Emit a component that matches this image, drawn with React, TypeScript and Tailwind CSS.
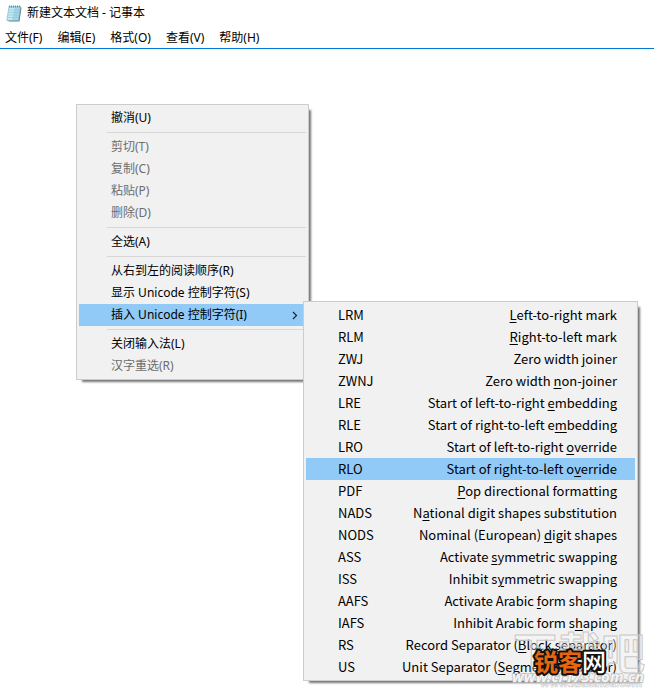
import React from "react";

type Item = { label: string; disabled?: boolean; submenu?: boolean };

const MENU_BAR = ["文件(F)", "编辑(E)", "格式(O)", "查看(V)", "帮助(H)"];

const GROUPS: Item[][] = [
  [{ label: "撤消(U)" }],
  [
    { label: "剪切(T)", disabled: true },
    { label: "复制(C)", disabled: true },
    { label: "粘贴(P)", disabled: true },
    { label: "删除(D)", disabled: true },
  ],
  [{ label: "全选(A)" }],
  [
    { label: "从右到左的阅读顺序(R)" },
    { label: "显示 Unicode 控制字符(S)" },
    { label: "插入 Unicode 控制字符(I)", submenu: true },
  ],
  [{ label: "关闭输入法(L)" }, { label: "汉字重选(R)", disabled: true }],
];

// code, text before the access key, access key, text after it
const CHARACTERS: [string, string, string, string][] = [
  ["LRM", "", "L", "eft-to-right mark"],
  ["RLM", "", "R", "ight-to-left mark"],
  ["ZWJ", "Zero width ", "j", "oiner"],
  ["ZWNJ", "Zero width ", "n", "on-joiner"],
  ["LRE", "Start of left-to-right ", "e", "mbedding"],
  ["RLE", "Start of right-to-left e", "m", "bedding"],
  ["LRO", "Start of left-to-right ", "o", "verride"],
  ["RLO", "Start of right-to-left o", "v", "erride"],
  ["PDF", "", "P", "op directional formatting"],
  ["NADS", "N", "a", "tional digit shapes substitution"],
  ["NODS", "Nominal (European) ", "d", "igit shapes"],
  ["ASS", "Activate ", "s", "ymmetric swapping"],
  ["ISS", "Inhibit s", "y", "mmetric swapping"],
  ["AAFS", "Activate Arabic ", "f", "orm shaping"],
  ["IAFS", "Inhibit Arabic form s", "h", "aping"],
  ["RS", "Record Separator (", "B", "lock separator)"],
  ["US", "Unit Separator (", "S", "egment separator)"],
];

function NotepadIcon() {
  return (
    <svg width="16" height="18" viewBox="0 0 16 18" aria-hidden="true">
      <path d="M14.500 3l1 .5-2 14H3l-1-1z" fill="#6d7f88" />
      <path d="M3 2.500h11.500L12.500 16.500H.8z" fill="#a3d6e6" stroke="#7fb4c8" strokeWidth=".6" />
      <path d="M3.500 4h5L6 16H1.500z" fill="#c4e9f4" />
      <path d="M3.200 6h10M2.900 8.500h10M2.500 11h10M2.200 13.500h10" stroke="#8cc3d8" strokeWidth=".6" />
      <path d="M3 2.500h12" stroke="#888" strokeWidth="2" strokeDasharray="1 1" />
    </svg>
  );
}

function CharacterMenu() {
  return (
    <ul
      role="menu"
      aria-label="Unicode 控制字符"
      className="absolute left-[224px] -top-[3px] z-10 w-[335px] border border-[#ccc] bg-[#f1f1f1] p-[2px] font-['Noto_Sans_CJK_SC',sans-serif] shadow-[4px_4px_2px_-2px_#777]"
    >
      {CHARACTERS.map(([code, before, key, after]) => (
        <li key={code} role="none">
          <button
            type="button"
            role="menuitem"
            className={`flex h-[22px] w-full items-center justify-between pr-[18px] pl-8 text-[13px] whitespace-nowrap ${
              code === "RLO" ? "bg-[#91c9f7]" : ""
            }`}
          >
            <span>{code}</span>
            <span>
              {before}
              <span className="underline underline-offset-2">{key}</span>
              {after}
            </span>
          </button>
        </li>
      ))}
    </ul>
  );
}

function ContextMenu() {
  return (
    <div
      role="menu"
      aria-label="编辑"
      className="absolute top-[55px] left-[76px] w-[233px] border border-[#ccc] bg-[#f1f1f1] p-[2px] shadow-[4px_4px_2px_-2px_#777]"
    >
      {GROUPS.map((group, index) => (
        <React.Fragment key={index}>
          {index > 0 && <hr className="my-[3px] ml-7 border-[#d7d7d7]" />}
          {group.map((item) => (
            <div key={item.label} role="none" className="relative">
              <button
                type="button"
                role="menuitem"
                disabled={item.disabled}
                className={`flex h-[22px] w-full items-center justify-between pr-2 pl-8 text-xs ${
                  item.submenu ? "bg-[#91c9f7]" : ""
                } ${item.disabled ? "text-[#6d6d6d]" : ""}`}
              >
                {item.label}
                {item.submenu && (
                  <svg width="6" height="9" viewBox="0 0 6 9" fill="none" stroke="#222" aria-hidden="true">
                    <path d="M1 1l3.500 3.500L1 8" strokeWidth="1.200" />
                  </svg>
                )}
              </button>
              {item.submenu && <CharacterMenu />}
            </div>
          ))}
        </React.Fragment>
      ))}
    </div>
  );
}

function Watermark() {
  return (
    <svg
      className="pointer-events-none absolute top-[576px] left-[506px] z-20"
      width="148"
      height="68"
      viewBox="0 0 148 68"
      aria-hidden="true"
    >
      <g fill="#fff" fillOpacity="0.3" stroke="#c8c8c8" strokeWidth="1">
        <text x="7" y="45" fontSize="44" fontWeight="700">下载吧</text>
        <text x="34" y="62" fontSize="11" fontWeight="700" strokeWidth=".6">www.xiazaiba.com</text>
      </g>
      <text x="6" y="57" fontSize="15" fontWeight="700" fontStyle="italic" fill="#f4f4f4" stroke="#bbb" strokeWidth="1.500" paintOrder="stroke">
        www.cr173.com.cn
      </text>
      <g fontSize="24" stroke="#111" strokeWidth="4" paintOrder="stroke" strokeLinejoin="round">
        <text x="28" y="46" fontWeight="700" fill="#e8650f">锐客</text>
        <text x="76" y="46" fontWeight="500" fill="#fff">网</text>
      </g>
    </svg>
  );
}

export default function App() {
  return (
    <div className="flex min-h-screen flex-col overflow-hidden bg-white font-['Noto_Sans','Noto_Sans_CJK_SC',sans-serif] text-xs text-black">
      <header className="border-b border-[#0078d7]">
        <div className="flex h-[26px] items-center gap-[5px] pl-[6px]">
          <NotepadIcon />
          <h1>新建文本文档 - 记事本</h1>
        </div>
        <nav className="flex h-[22px] items-center gap-[15px] pt-[2px] pl-[5px]">
          {MENU_BAR.map((label) => (
            <button key={label} type="button">
              {label}
            </button>
          ))}
        </nav>
      </header>
      <main className="relative flex-1">
        <ContextMenu />
        <Watermark />
      </main>
    </div>
  );
}
